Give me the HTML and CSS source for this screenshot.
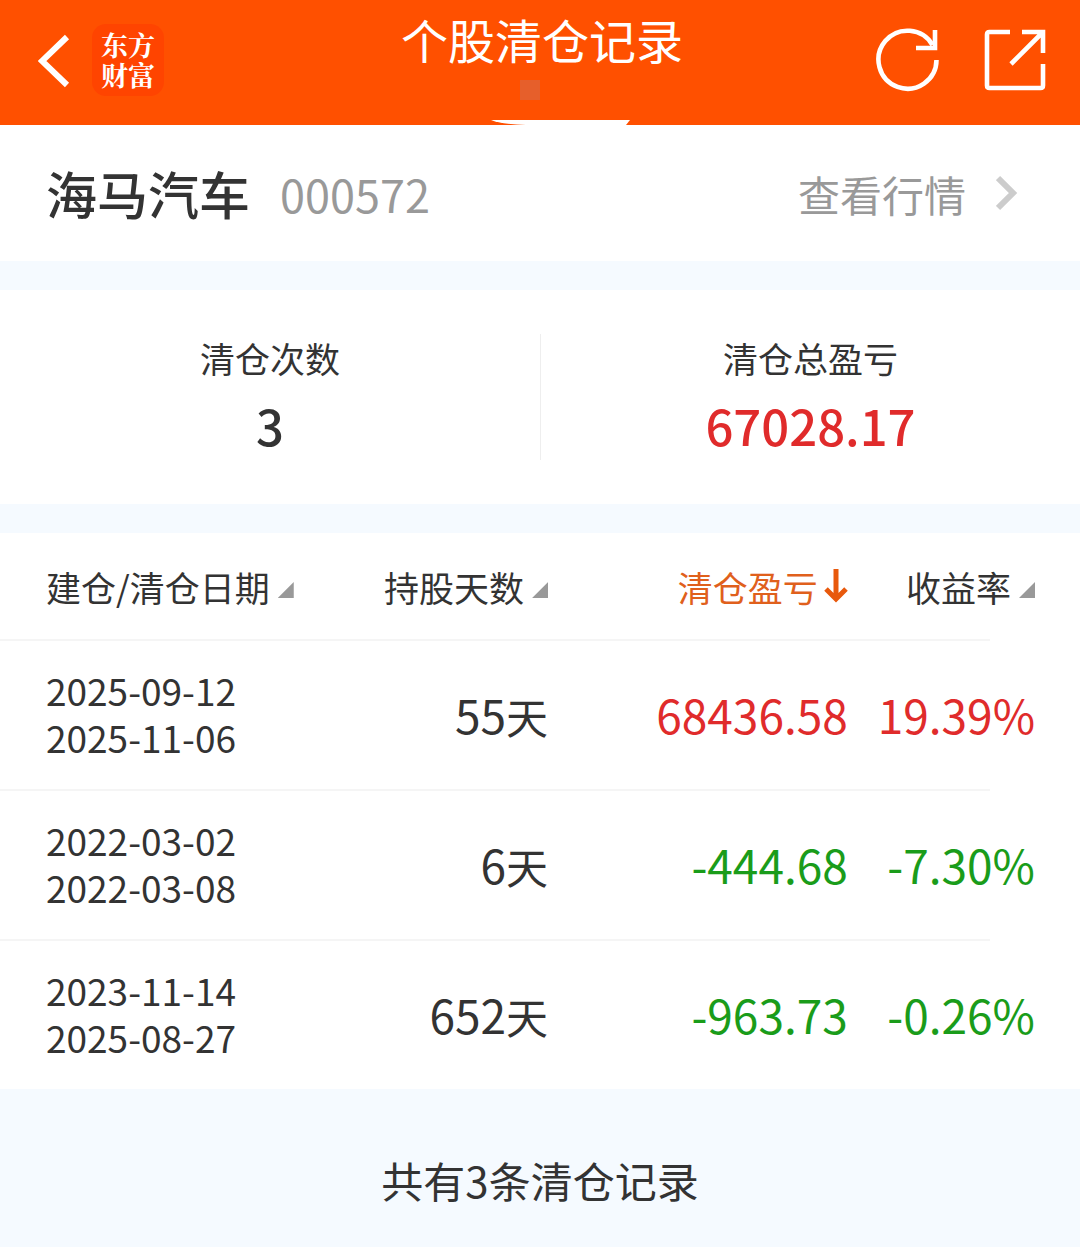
FILE: index.html
```html
<!DOCTYPE html>
<html lang="zh-CN">
<head>
<meta charset="utf-8">
<meta name="viewport" content="width=device-width, initial-scale=1">
<title>个股清仓记录</title>
<link rel="stylesheet" href="styles.css">
</head>
<body>
<header class="topbar">
  <div class="topbar-side">
    <button class="icon-button" type="button" aria-label="返回">
      <svg width="32" height="56" viewBox="0 0 32 56" fill="none" stroke="#fff" stroke-width="6"><path d="M29 5 4 29l25 24"/></svg>
    </button>
    <a class="brand" href="#">东方<br>财富</a>
  </div>
  <div class="topbar-center">
    <h1 class="title">个股清仓记录</h1>
    <span class="marker"></span>
  </div>
  <div class="topbar-side topbar-actions">
    <button class="icon-button" type="button" aria-label="刷新">
      <svg width="64" height="64" viewBox="0 0 64 64" fill="none" stroke="#fff" stroke-width="4.6"><path d="M60.500 32A29 29 0 1 1 56.500 17"/><path d="M59 2v18H40"/></svg>
    </button>
    <button class="icon-button" type="button" aria-label="分享">
      <svg width="62" height="62" viewBox="0 0 62 62" fill="none" stroke="#fff" stroke-width="4.600"><path d="M26 3H5.500Q3 3 3 5.500v51Q3 59 5.500 59h51q2.500 0 2.500-2.500V35M38 3h21v21M59 3 27 35"/></svg>
    </button>
  </div>
  <svg class="notch" width="140" height="5" viewBox="0 0 140 5" fill="#fff"><path d="M1 0h139l-4 5H36Q10 4 1 0Z"/></svg>
</header>
<main>
  <section class="stock">
    <h2 class="stock-name">海马汽车</h2>
    <span class="stock-code">000572</span>
    <a class="quote-link" href="#">查看行情
      <svg width="22" height="36" viewBox="0 0 22 36" fill="none" stroke="#ccc" stroke-width="6"><path d="M2 3l15 15L2 33"/></svg>
    </a>
  </section>
  <section class="summary">
    <div class="stat">
      <span class="stat-label">清仓次数</span>
      <strong class="stat-value">3</strong>
    </div>
    <div class="stat">
      <span class="stat-label">清仓总盈亏</span>
      <strong class="stat-value gain">67028.17</strong>
    </div>
  </section>
  <table class="records">
    <colgroup><col class="col-date"><col class="col-days"><col class="col-profit"><col></colgroup>
    <thead>
      <tr>
        <th scope="col"><button class="sort" type="button">建仓/清仓日期<i class="corner"></i></button></th>
        <th scope="col"><button class="sort" type="button">持股天数<i class="corner"></i></button></th>
        <th scope="col" aria-sort="descending"><button class="sort sort-active" type="button">清仓盈亏<svg width="24" height="34" viewBox="0 0 24 34" fill="none" stroke="#e8590c" stroke-width="5"><path d="M12 0v30M2 20l10 10 10-10"/></svg></button></th>
        <th scope="col"><button class="sort" type="button">收益率<i class="corner"></i></button></th>
      </tr>
    </thead>
    <tbody>
      <tr><td class="dates">2025-09-12<br>2025-11-06</td><td>55<span class="unit">天</span></td><td class="gain">68436.58</td><td class="gain">19.39%</td></tr>
      <tr><td class="dates">2022-03-02<br>2022-03-08</td><td>6<span class="unit">天</span></td><td class="loss">-444.68</td><td class="loss">-7.30%</td></tr>
      <tr><td class="dates">2023-11-14<br>2025-08-27</td><td>652<span class="unit">天</span></td><td class="loss">-963.73</td><td class="loss">-0.26%</td></tr>
    </tbody>
  </table>
</main>
<footer class="total">共有3条清仓记录</footer>
</body>
</html>
```
FILE: styles.css
```css
* {
  box-sizing: border-box;
}

body {
  margin: 0;
  background: #f5faff;
  color: #333;
  font-family: "Noto Sans CJK SC", sans-serif;
}

button {
  border: 0;
  padding: 0;
  background: none;
  color: inherit;
  font: inherit;
  cursor: pointer;
}

a {
  color: inherit;
  text-decoration: none;
}

svg {
  display: block;
  flex: none;
}

.topbar {
  position: relative;
  display: grid;
  grid-template-columns: 1fr auto 1fr;
  height: 125px;
  padding: 0 34px 0 38px;
  background: #ff5000;
  color: #fff;
}

.topbar-side {
  display: flex;
  align-items: center;
  gap: 22px;
  height: 120px;
}

.topbar-actions {
  justify-content: flex-end;
  gap: 44px;
}

.brand {
  width: 72px;
  height: 72px;
  padding: 6px 0;
  border-radius: 14px;
  background: #ff4400;
  font-family: "Noto Serif CJK SC", "Noto Sans CJK SC", sans-serif;
  font-size: 27px;
  font-weight: 700;
  line-height: 30px;
  text-align: center;
}

.topbar-center {
  display: flex;
  flex-direction: column;
  align-items: center;
}

.title {
  margin: 0;
  padding-top: 4px;
  font-size: 47px;
  font-weight: 400;
  line-height: 70px;
}

.marker {
  width: 20px;
  height: 20px;
  margin: 6px 24px 0 0;
  background: #e65f2b;
}

.notch {
  position: absolute;
  bottom: 0;
  left: calc(50% - 50px);
}

.stock {
  display: flex;
  align-items: center;
  height: 136px;
  padding: 0 62px 0 46px;
  background: #fff;
}

.stock-name {
  margin: 0 30px 0 0;
  font-size: 51px;
  font-weight: 500;
}

.stock-code {
  color: #999;
  font-size: 45px;
}

.quote-link {
  display: flex;
  align-items: center;
  gap: 30px;
  margin-left: auto;
  color: #999;
  font-size: 42px;
}

.summary {
  display: grid;
  grid-template-columns: 1fr 1fr;
  margin: 29px 0;
  padding: 44px 0;
  background: #fff;
}

.stat {
  display: flex;
  flex-direction: column;
  align-items: center;
}

.stat + .stat {
  border-left: 1px solid #eee;
}

.stat-label {
  font-size: 35px;
  line-height: 48px;
}

.stat-value {
  padding-top: 8px;
  font-size: 49px;
  font-weight: 500;
  line-height: 70px;
}

.gain {
  color: #e02b2b;
}

.loss {
  color: #1a9c1a;
}

.records {
  width: 100%;
  border-collapse: collapse;
  table-layout: fixed;
  background: #fff;
}

.col-date {
  width: 32%;
}

.col-days {
  width: 18.75%;
}

.col-profit {
  width: 27.75%;
}

.records th,
.records td {
  padding: 0;
  text-align: right;
  white-space: nowrap;
}

.records th:first-child,
.records td:first-child {
  padding-left: 46px;
  text-align: left;
}

.records th:last-child,
.records td:last-child {
  padding-right: 45px;
}

.records th {
  height: 106px;
  font-size: 35px;
  font-weight: 400;
}

.records td {
  height: 150px;
  font-size: 46px;
}

.records tbody tr {
  background: linear-gradient(#f5f5f5, #f5f5f5) no-repeat 0 0 / calc(100% - 90px) 2px;
}

.records .dates {
  font-size: 37px;
  line-height: 47px;
}

.unit {
  font-size: 42px;
}

.sort {
  display: inline-flex;
  align-items: center;
  gap: 8px;
}

.sort-active {
  gap: 6px;
  color: #e0601c;
}

.corner {
  width: 16px;
  height: 16px;
  margin-top: 8px;
  background: #999;
  clip-path: polygon(100% 0, 100% 100%, 0 100%);
}

.total {
  padding: 60px 0 36px;
  font-size: 42px;
  line-height: 62px;
  text-align: center;
}
```
